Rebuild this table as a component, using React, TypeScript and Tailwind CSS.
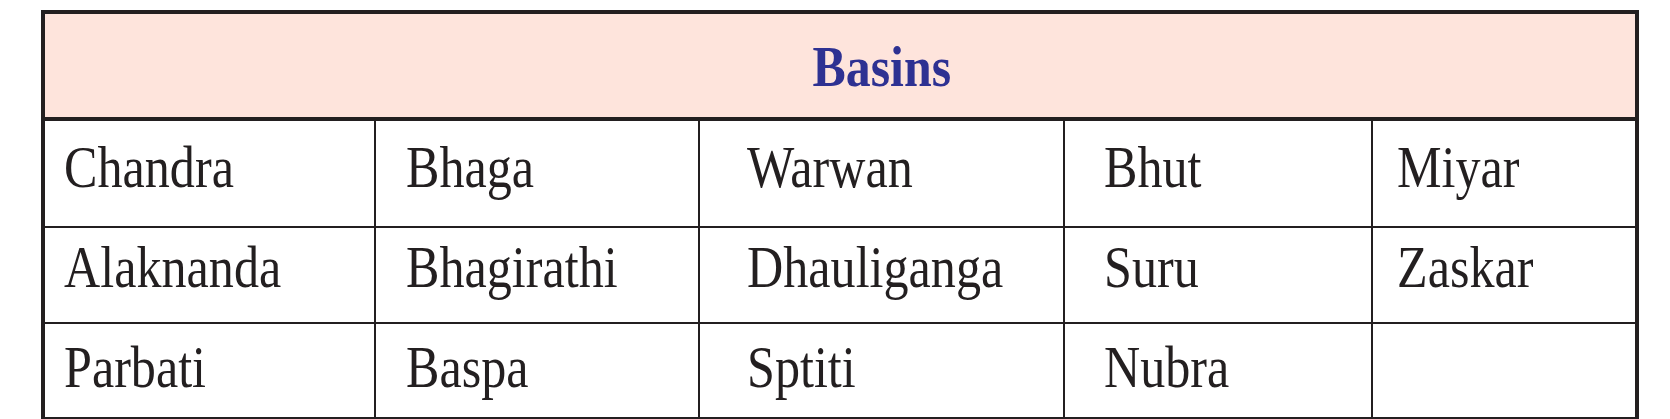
const rows = [
  { cells: ['Chandra', 'Bhaga', 'Warwan', 'Bhut', 'Miyar'], h: 'h-[105px]', pb: 'pb-[12px]' },
  { cells: ['Alaknanda', 'Bhagirathi', 'Dhauliganga', 'Suru', 'Zaskar'], h: 'h-[94px]', pb: 'pb-[16px]' },
  { cells: ['Parbati', 'Baspa', 'Sptiti', 'Nubra', ''], h: 'h-[93px]', pb: 'pb-[7px]' },
]

// per-column left padding, taken from the reference
const colPad = ['pl-[19px]', 'pl-[30px]', 'pl-[47px]', 'pl-[39px]', 'pl-[24px]']

export default function App() {
  return (
    <div className="min-h-screen bg-white pt-[10px] pl-[41px]">
      <div className="w-[1598px] border-4 border-[#231f20] font-['Liberation_Serif',_'Times_New_Roman',_serif] text-[#231f20]">
        {/* header */}
        <div className="flex h-[107px] items-center justify-center border-b-4 border-[#231f20] bg-[#fee4dc] pl-[84px] pt-[2px]">
          <span className="inline-block scale-x-[0.89] text-[56px] font-bold leading-none text-[#2e3192]">
            Basins
          </span>
        </div>

        {rows.map((row, ri) => (
          <div
            key={ri}
            className={`grid grid-cols-[331px_324px_365px_308px_262px] ${
              ri < rows.length - 1 ? 'border-b-2 border-[#231f20]' : ''
            }`}
          >
            {row.cells.map((name, ci) => (
              <div
                key={ci}
                className={`flex items-center ${row.h} ${row.pb} ${colPad[ci]} ${
                  ci < row.cells.length - 1 ? 'border-r-2 border-[#231f20]' : ''
                }`}
              >
                <span className="inline-block origin-left scale-x-[0.85] whitespace-nowrap text-[59px] leading-none">
                  {name}
                </span>
              </div>
            ))}
          </div>
        ))}
      </div>
    </div>
  )
}
